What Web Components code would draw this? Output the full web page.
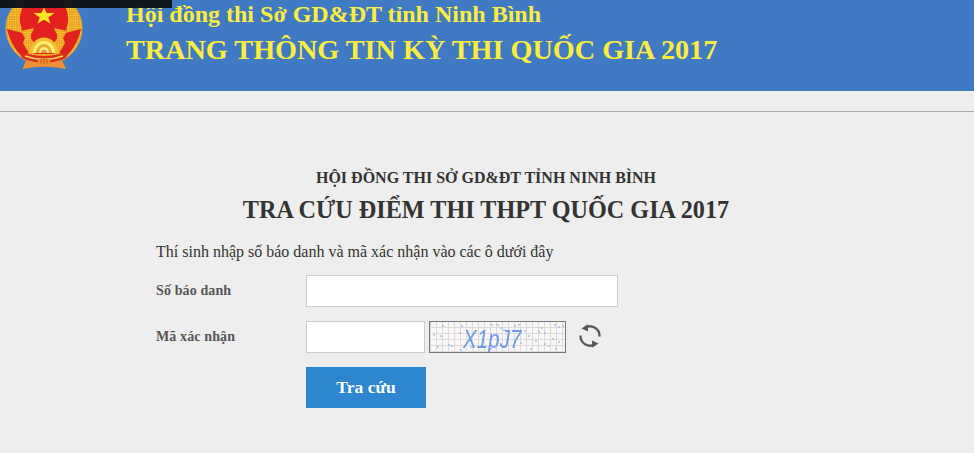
<!DOCTYPE html>
<html lang="vi"><head><meta charset="utf-8"><title>Tra cứu điểm thi</title>
<style>
html,body{margin:0;padding:0;background:#eee;height:453px;overflow:hidden;font-family:"Liberation Serif",serif}
</style></head><body>
<site-header></site-header>
<lookup-panel></lookup-panel>
<script>
function def(name,html,extra){
  customElements.define(name,class extends HTMLElement{
    constructor(){super();this.attachShadow({mode:'open'}).innerHTML=html;}
    connectedCallback(){if(extra)extra(this.shadowRoot);}
  });
}
def('state-emblem',`<style>:host{display:block;width:90px;height:75px}svg{display:block}</style>
<svg width="90" height="75" viewBox="0 0 90 75">
<defs>
<pattern id="g" width="2.400" height="2.400" patternUnits="userSpaceOnUse"><rect width="2.400" height="2.400" fill="#e8981f"/><circle cx="1.200" cy="1.200" r=".85" fill="#fcd63a"/></pattern>
<g id="side"><path d="M7 29 L23 33 L30 49 L24 59 L18 52 C13 46 9 38 7 29Z" fill="#e2221f"/>
<path d="M34 28 L21 31 L25 38 L23 43 L27 50 L32 55 L37 51 L34 43 L30 37Z" fill="url(#g)"/></g>
</defs>
<path d="M22.500 69 L27 58 L61 58 L66 69 Q44 64.500 22.500 69Z" fill="#f08f34"/>
<path d="M44 -7 C20 -7 6 10 6 28 C6 42 14 54 25 60 L63 60 C74 54 82 42 82 28 C82 10 68 -7 44 -7Z" fill="url(#g)" stroke="#dfa13c" stroke-width="1"/>
<path d="M44 -6 C27 -6 19 8 20 22 L22 31 L31 36 L31 54 L57 54 L57 36 L66 31 L68 22 C69 8 61 -6 44 -6Z" fill="#e3221f"/>
<use href="#side"/><use href="#side" transform="translate(88 0) scale(-1 1)"/>
<path d="M44 7.500 L46.500 13 L54.500 13 L48.200 17.500 L50.500 23.500 L44 19.800 L37.500 23.500 L39.800 17.500 L33.500 13 L41.500 13Z" fill="#ffe622"/>
<path d="M30 53 A14 15.500 0 0 1 58 53Z" fill="#f4c02c"/>
<path d="M33 53 A11 12 0 0 1 55 53Z" fill="#fbee74"/>
<path d="M36 53 A8 9 0 0 1 52 53Z" fill="#eeab2a"/>
<path d="M39 53 A5 6 0 0 1 49 53Z" fill="#fcee8c"/>
<path d="M41 53 A3 3.500 0 0 1 47 53Z" fill="#e89a2c"/>
<path d="M23 52 Q44 60 65 52 L67 57 L62 60 Q44 65 26 60 L21 57Z" fill="#d9301e"/>
<path d="M25 56 Q44 63 63 56" fill="none" stroke="#f8d75c" stroke-width="1.800"/>
<path d="M38 59h12v4.500H38z" fill="#e98d2d"/><path d="M41 59v4.500M44 59v4.500M47 59v4.500" stroke="#c9401f" stroke-width=".7"/>
</svg>`);

def('site-header',`<style>
:host{display:block;position:relative;height:91px;background:#3f7ac3;margin-bottom:20px}
.row{display:flex;height:91px;overflow:hidden}
state-emblem{flex:none}
.txt{margin-left:36px;color:#ffed3e;font-weight:bold;font-family:"Liberation Serif",serif;padding-top:1px}
.a{font-size:24px;line-height:27px;white-space:nowrap}
.b{font-size:28.200px;line-height:36px;margin-top:4px;white-space:nowrap}
.bar{position:absolute;left:0;top:0;width:172px;height:8px;background:#0f1217;opacity:.96}
</style>
<div class="row"><state-emblem></state-emblem><div class="txt"><div class="a">Hội đồng thi Sở GD&amp;ĐT tỉnh Ninh Bình</div><div class="b">TRANG THÔNG TIN KỲ THI QUỐC GIA 2017</div></div></div>
<div class="bar"></div>`);

def('captcha-image',`<style>
:host{display:block;width:135px;height:30px;border:1px solid #777;position:relative;overflow:hidden;
background-color:#faf7f7;
background-image:repeating-linear-gradient(90deg,#dedadb 0 1px,transparent 1px 6px),repeating-linear-gradient(0deg,#dedadb 0 1px,transparent 1px 6px)}
svg{position:absolute;inset:0;filter:blur(.6px)}
span{position:absolute;left:33px;top:3px;font:italic 25px/28px "Liberation Sans",sans-serif;color:#6f9aea;transform:scaleX(.82);transform-origin:0 0;filter:blur(.3px);white-space:nowrap}
</style><svg width="135" height="30" id="s"></svg><span>X1pJ7</span>`,root=>{
  const pts=[[12,3],[31,3],[61,2],[67,2],[84,3],[88,2],[124,2],[128,4],[132,3],[10,13],[29,10],[18,22],[21,23],[30,27],[52,19],[100,26],[108,9],[114,10],[122,16],[128,19],[105,18],[114,21],[118,23],[7,24],[73,7],[82,8],[94,8],[70,5],[60,26],[90,20],[3,12],[40,24],[98,13],[125,26],[111,5]];
  root.getElementById('s').innerHTML=pts.map(p=>`<rect x="${p[0]}" y="${p[1]}" width="2" height="2" fill="#8fb2f0" opacity=".6"/>`).join('');
});

def('refresh-icon',`<style>:host{display:block;width:24px;height:24px}svg{display:block}</style>
<svg width="24" height="24" viewBox="0 0 24 24" fill="none" stroke="#585858" stroke-width="2.300">
<path d="M7 3.800 A9.500 9.500 0 0 1 21.500 12.500"/><path d="M17 20.200 A9.500 9.500 0 0 1 2.500 11.500"/>
<path d="M9.800 .3 L10 7.500 L3.500 4.500Z" fill="#585858" stroke="none"/><path d="M14.200 23.700 L14 16.500 L20.500 19.500Z" fill="#585858" stroke="none"/>
</svg>`);

def('text-field',`<style>
:host{display:block;box-sizing:border-box;height:32px;background:#fff;border:1px solid #ccc}
</style>`);

def('form-row',`<style>
:host{display:flex;align-items:center;height:32px;font:bold 14px "Liberation Serif",serif;color:#555;letter-spacing:.12px}
.l{width:150px;flex:none;white-space:nowrap}
.c{display:flex;align-items:center}
</style><div class="l"><slot name="label"></slot></div><div class="c"><slot></slot></div>`);

def('lookup-panel',`<style>
:host{display:block;border-top:1px solid #aaa;background:#eee;height:341px;box-sizing:border-box;font-family:"Liberation Serif",serif;color:#333}
.wrap{width:660px;margin-left:156px;padding-top:56px}
.h1{text-align:center;font-weight:bold;font-size:16px;line-height:20px}
.h2{text-align:center;font-weight:bold;font-size:24.200px;line-height:30px;margin-top:7px}
.p{font-size:16px;line-height:20px;margin-top:17px}
.f{display:flex;flex-direction:column;gap:14px;margin-top:13px}
captcha-image{margin-left:4px;margin-top:-1px}
refresh-icon{margin-left:12px;margin-top:-3px}
.btn{display:block;width:120px;height:41px;margin:14px 0 0 150px;border:0;padding:0;background:#2e86d0;color:#fff;font:bold 17.500px "Liberation Serif",serif}
</style>
<div class="wrap">
<div class="h1">HỘI ĐỒNG THI SỞ GD&amp;ĐT TỈNH NINH BÌNH</div>
<div class="h2">TRA CỨU ĐIỂM THI THPT QUỐC GIA 2017</div>
<div class="p">Thí sinh nhập số báo danh và mã xác nhận vào các ô dưới đây</div>
<div class="f">
<form-row><span slot="label">Số báo danh</span><text-field style="width:312px"></text-field></form-row>
<form-row><span slot="label">Mã xác nhận</span><text-field style="width:119px"></text-field><captcha-image></captcha-image><refresh-icon></refresh-icon></form-row>
</div>
<button class="btn">Tra cứu</button>
</div>`);
</script>
</body></html>
